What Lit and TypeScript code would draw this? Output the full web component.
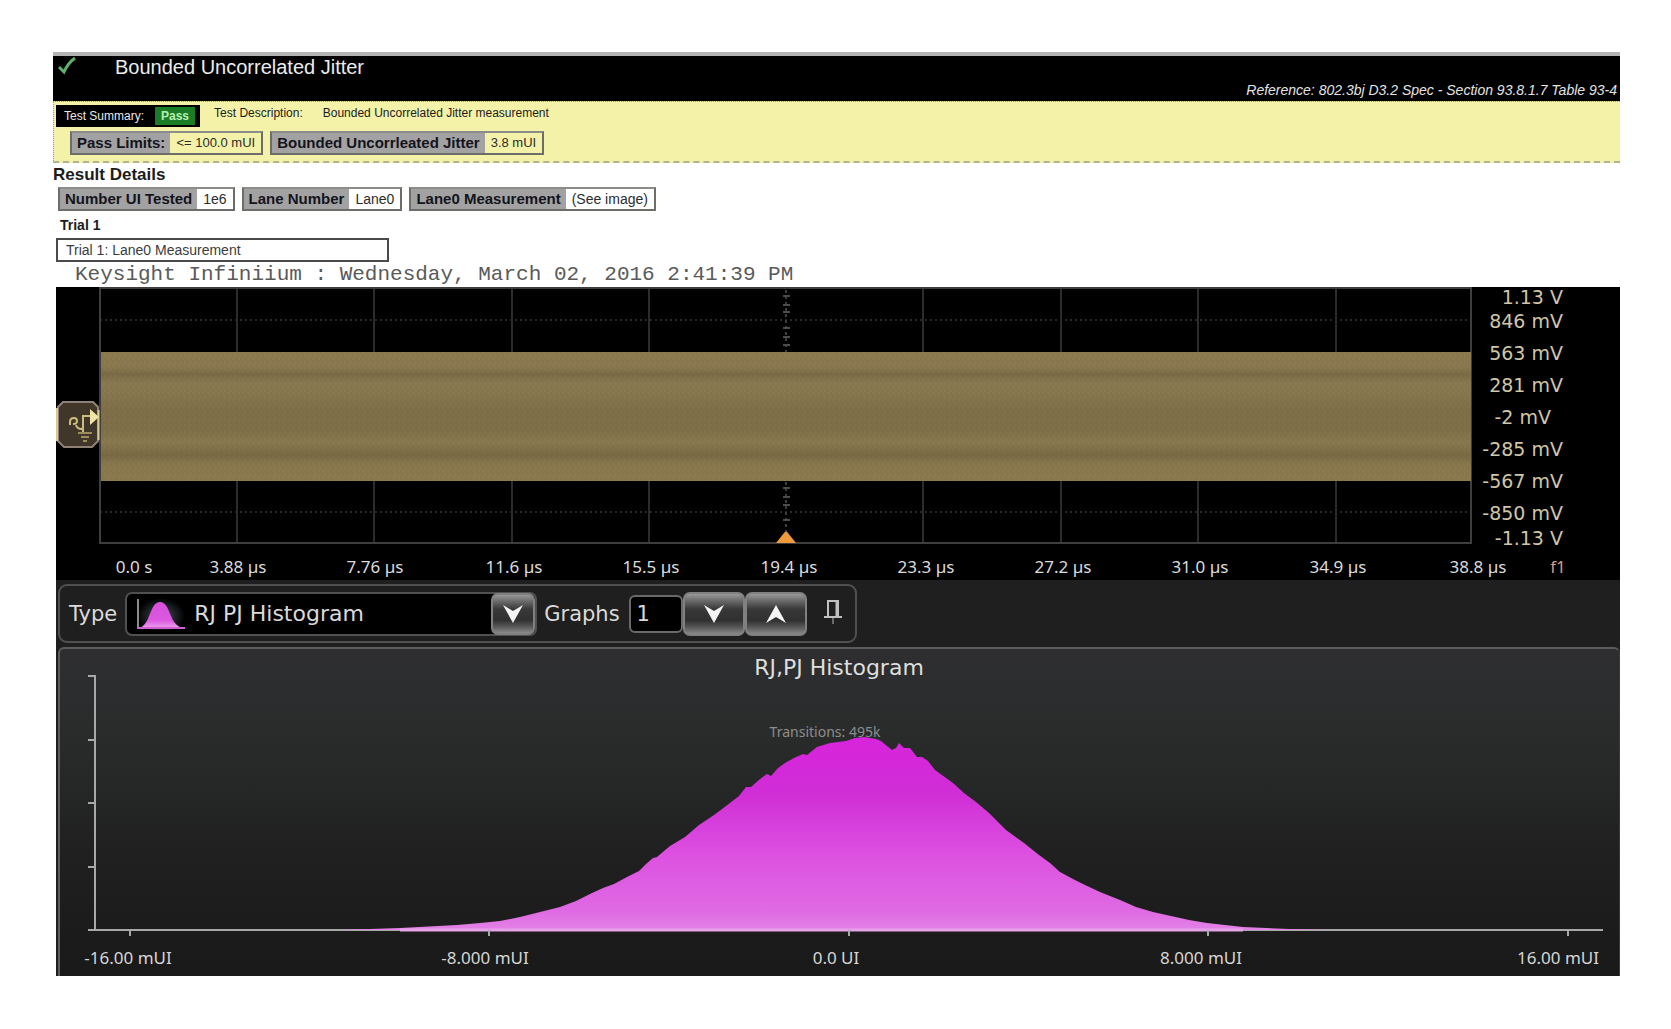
import { LitElement, html, svg, css } from "lit";
import { customElement } from "lit/decorators.js";

interface Fact {
  label: string;
  value: string;
}

const LIMITS: Fact[] = [
  { label: "Pass Limits:", value: "<= 100.0 mUI" },
  { label: "Bounded Uncorrleated Jitter", value: "3.8 mUI" },
];

const DETAILS: Fact[] = [
  { label: "Number UI Tested", value: "1e6" },
  { label: "Lane Number", value: "Lane0" },
  { label: "Lane0 Measurement", value: "(See image)" },
];

@customElement("fact-chips")
class FactChips extends LitElement {
  static properties = { facts: { attribute: false } };
  declare facts: Fact[];

  constructor() {
    super();
    this.facts = [];
  }

  static styles = css`
    :host {
      display: block;
    }
    .chips {
      display: flex;
      flex-wrap: wrap;
      gap: 7px;
      margin: 0;
    }
    .chip {
      display: flex;
      box-sizing: border-box;
      height: 24px;
      border: 2px solid #6d6d6a;
      border-top-color: #8c8c88;
      font-family: "Liberation Sans", Arial, sans-serif;
      font-size: var(--value-size, 13px);
      line-height: 20px;
      color: #2c2c2c;
    }
    .label {
      padding: 0 5px;
      background: #a2a2a2;
      color: #14141c;
      font-size: 15px;
      font-weight: bold;
    }
    .value {
      margin: 0;
      padding: 0 6px;
    }
  `;

  render() {
    return html`<dl class="chips">
      ${this.facts.map(
        (f) => html`<div class="chip">
          <dt class="label">${f.label}</dt>
          <dd class="value">${f.value}</dd>
        </div>`
      )}
    </dl>`;
  }
}

const VOLTS = [
  { text: "1.13 V", x: 1563, y: 304 },
  { text: "846 mV", x: 1563, y: 328 },
  { text: "563 mV", x: 1563, y: 360 },
  { text: "281 mV", x: 1563, y: 392 },
  { text: "-2 mV", x: 1551, y: 424 },
  { text: "-285 mV", x: 1563, y: 456 },
  { text: "-567 mV", x: 1563, y: 488 },
  { text: "-850 mV", x: 1563, y: 520 },
  { text: "-1.13 V", x: 1563, y: 545 },
];

const TIMES = [
  { text: "0.0 s", x: 134 },
  { text: "3.88 µs", x: 238 },
  { text: "7.76 µs", x: 375 },
  { text: "11.6 µs", x: 514 },
  { text: "15.5 µs", x: 651 },
  { text: "19.4 µs", x: 789 },
  { text: "23.3 µs", x: 926 },
  { text: "27.2 µs", x: 1063 },
  { text: "31.0 µs", x: 1200 },
  { text: "34.9 µs", x: 1338 },
  { text: "38.8 µs", x: 1478 },
];

const COLUMNS = [237, 374, 512, 649, 923, 1061, 1198, 1336];
const CROSS_TICKS = [296, 305, 312, 328, 337, 345, 488, 497, 505, 520];

@customElement("scope-trace")
class ScopeTrace extends LitElement {
  static styles = css`
    :host {
      display: block;
    }
    .plot {
      display: block;
      width: 100%;
      overflow: visible;
      background: #000;
    }
    .frame {
      fill: none;
      stroke: #3e3e3e;
      stroke-width: 2;
    }
    .column {
      stroke: #2c2c2c;
      stroke-width: 2;
    }
    .row {
      stroke: #282828;
      stroke-width: 2;
      stroke-dasharray: 2 3;
    }
    .axis {
      stroke: #3c3c3c;
      stroke-width: 2;
      stroke-dasharray: 3 3;
    }
    .cross {
      stroke: #4c4c4c;
      stroke-width: 2;
    }
    .volt {
      fill: #d0c6a8;
      font: 19px "DejaVu Sans", Verdana, sans-serif;
      text-anchor: end;
    }
    .time {
      fill: #dcdcdc;
      font: 17px "Noto Sans", "Open Sans", sans-serif;
      text-anchor: middle;
    }
    .source {
      fill: #d79c80;
    }
  `;

  render() {
    return html`<svg class="plot" viewBox="56 287 1564 293" role="img" aria-label="Lane0 waveform">
      <defs>
        <linearGradient id="band" x1="0" y1="0" x2="0" y2="1">
          <stop offset="0" stop-color="#8d7b52" />
          <stop offset="0.12" stop-color="#8a7850" />
          <stop offset="0.17" stop-color="#7b6b46" />
          <stop offset="0.24" stop-color="#8a7951" />
          <stop offset="0.32" stop-color="#88774f" />
          <stop offset="0.45" stop-color="#7f7049" />
          <stop offset="0.6" stop-color="#7f7049" />
          <stop offset="0.7" stop-color="#8a7951" />
          <stop offset="0.8" stop-color="#7a6a44" />
          <stop offset="0.87" stop-color="#8a784e" />
          <stop offset="1" stop-color="#8d7b4f" />
        </linearGradient>
        <pattern id="grain" width="5" height="7" patternUnits="userSpaceOnUse">
          <path d="M1 0V4M3 3V7" stroke="#4f4428" stroke-opacity="0.14" />
        </pattern>
      </defs>
      ${COLUMNS.map((x) => svg`<line class="column" x1=${x} x2=${x} y1="288" y2="543" />`)}
      ${[320, 512].map((y) => svg`<line class="row" x1="100" x2="1471" y1=${y} y2=${y} />`)}
      <line class="axis" x1="786" x2="786" y1="290" y2="543" />
      ${CROSS_TICKS.map((y) => svg`<line class="cross" x1="783" x2="790" y1=${y} y2=${y} />`)}
      <rect class="frame" x="100" y="288" width="1371" height="255" />
      <rect x="101" y="352" width="1370" height="129" fill="url(#band)" />
      <rect x="101" y="352" width="1370" height="129" fill="url(#grain)" />
      <path d="M776 543L784 533Q786 530 788 533L796 543Z" fill="#f09a3e" />
      <g>
        <path d="M63 402H93L98 407V441L92 447H64L58 441V407Z" fill="#40362a" stroke="#8f8178" stroke-width="2" />
        <path d="M57 408V441M98.500 410V440" stroke="#d8cb90" stroke-width="2" />
        <path d="M70 425V422Q70 418 74 418Q77 418 77 421Q77 424 73 424M76 425Q77 429 82 429M83 432V416H91" fill="none" stroke="#cdbd7c" stroke-width="2" />
        <path d="M78 433H92M81 437H89M83 441H87" stroke="#9b8d5c" stroke-width="2" />
        <path d="M90 409L99 417L90 425Z" fill="#f0e3a6" />
      </g>
      ${VOLTS.map((v) => svg`<text class="volt" x=${v.x} y=${v.y}>${v.text}</text>`)}
      ${TIMES.map((t) => svg`<text class="time" x=${t.x} y="573">${t.text}</text>`)}
      <text class="time source" x="1558" y="573">f1</text>
    </svg>`;
  }
}

/* Outline of the distribution, left tail to right tail. */
const BELL: number[][] = [
  [340, 930], [400, 928], [457, 925], [480, 923], [500, 921], [520, 917], [540, 912], [560, 907],
  [576, 901], [592, 893], [603, 888], [614, 884], [627, 877], [639, 871], [646, 864], [653, 858],
  [657, 857], [670, 846], [685, 837], [699, 825], [714, 815], [726, 806], [739, 796], [746, 787],
  [751, 787], [760, 779], [767, 774], [771, 776], [778, 768], [785, 763], [794, 758], [803, 754],
  [807, 755], [817, 747], [830, 743], [846, 741], [855, 738], [864, 737], [876, 739], [881, 741],
  [887, 746], [892, 750], [896, 748], [899, 743], [904, 748], [910, 748], [917, 757], [922, 757],
  [928, 761], [935, 770], [953, 783], [964, 793], [976, 802], [989, 813], [1006, 830], [1024, 843],
  [1039, 855], [1050, 863], [1060, 872], [1073, 879], [1085, 885], [1100, 892], [1120, 900],
  [1136, 907], [1153, 912], [1171, 916], [1189, 920], [1207, 923], [1243, 927], [1289, 929], [1330, 930],
];

const BINS = [
  { text: "-16.00 mUI", tick: 130, x: 128 },
  { text: "-8.000 mUI", tick: 489, x: 485 },
  { text: "0.0 UI", tick: 849, x: 836 },
  { text: "8.000 mUI", tick: 1208, x: 1201 },
  { text: "16.00 mUI", tick: 1568, x: 1558 },
];

@customElement("jitter-histogram")
class JitterHistogram extends LitElement {
  static styles = css`
    :host {
      display: block;
    }
    .plot {
      display: block;
      width: 100%;
    }
    .axis {
      fill: none;
      stroke: #a8a8a8;
      stroke-width: 2;
    }
    .tick {
      stroke: #a8a8a8;
      stroke-width: 2;
    }
    .title {
      fill: #dedede;
      font: 22px "DejaVu Sans", Verdana, sans-serif;
      text-anchor: middle;
    }
    .bin {
      fill: #d6d6d6;
      font: 17px "Noto Sans", "Open Sans", sans-serif;
      text-anchor: middle;
    }
    .note {
      fill: #8d8d8d;
      font: 14px "Noto Sans", "Open Sans", sans-serif;
      text-anchor: middle;
    }
  `;

  render() {
    const outline = BELL.map((p) => p.join(" ")).join("L");
    return html`<svg class="plot" viewBox="60 649 1559 327" role="img" aria-label="RJ,PJ Histogram">
      <defs>
        <linearGradient id="bell" gradientUnits="userSpaceOnUse" x1="0" y1="736" x2="0" y2="931">
          <stop offset="0" stop-color="#d824dc" />
          <stop offset="0.3" stop-color="#d02ed6" />
          <stop offset="0.6" stop-color="#dc50e0" />
          <stop offset="0.9" stop-color="#df6ae3" />
          <stop offset="1" stop-color="#e384e6" />
        </linearGradient>
      </defs>
      <path class="axis" d="M95 675V930H1603" />
      ${[676, 740, 803, 867, 930].map((y) => svg`<line class="tick" x1="88" x2="95" y1=${y} y2=${y} />`)}
      <path d="M${outline}Z" fill="url(#bell)" />
      <path d="M400 930H1243" stroke="#e6a2e6" stroke-width="3" />
      ${BINS.map(
        (b) => svg`<line class="tick" x1=${b.tick} x2=${b.tick} y1="930" y2="936" />
          <text class="bin" x=${b.x} y="964">${b.text}</text>`
      )}
      <text class="title" x="839" y="675">RJ,PJ Histogram</text>
      <text class="note" x="825" y="737">Transitions: 495k</text>
    </svg>`;
  }
}

const downArrow = html`<svg width="22" height="20" viewBox="0 0 22 20" aria-hidden="true">
  <path d="M1 1L11 7L21 1L11 19Z" fill="#f4f4f4" />
</svg>`;

const upArrow = html`<svg width="22" height="20" viewBox="0 0 22 20" aria-hidden="true">
  <path d="M1 19L11 13L21 19L11 1Z" fill="#f4f4f4" />
</svg>`;

@customElement("graph-toolbar")
class GraphToolbar extends LitElement {
  static styles = css`
    :host {
      display: block;
    }
    .bar {
      display: inline-flex;
      align-items: center;
      box-sizing: border-box;
      height: 59px;
      padding: 0 12px 0 9px;
      border: 2px solid #505050;
      border-radius: 9px;
      font: 21px "DejaVu Sans", Verdana, sans-serif;
      color: #dadada;
      vertical-align: top;
    }
    .combo {
      display: flex;
      align-items: center;
      box-sizing: border-box;
      width: 412px;
      height: 44px;
      margin: 0 7px 0 8px;
      padding-left: 9px;
      border: 2px solid #505050;
      border-radius: 7px;
      background: #000;
    }
    .type {
      flex: 1;
      min-width: 0;
      height: 36px;
      margin: 0;
      padding: 0 0 0 8px;
      border: 0;
      appearance: none;
      background: transparent;
      color: inherit;
      font: 22px "DejaVu Sans", Verdana, sans-serif;
    }
    .key {
      display: flex;
      align-items: center;
      justify-content: center;
      box-sizing: border-box;
      width: 62px;
      height: 44px;
      padding: 0;
      border: 2px solid #808080;
      border-radius: 7px;
      background: linear-gradient(#999 0%, #6c6c6c 16%, #383838 38%, #303030 66%, #5a5a5a 84%, #8a8a8a 100%);
    }
    .drop {
      width: 44px;
      height: 42px;
      pointer-events: none;
    }
    .count {
      box-sizing: border-box;
      width: 54px;
      height: 38px;
      margin: 0 0 0 9px;
      padding: 0 0 0 6px;
      border: 2px solid #6a6a6a;
      border-radius: 6px;
      background: #000;
      color: inherit;
      font: inherit;
    }
    .pin {
      display: flex;
      align-self: flex-start;
      margin: 0 0 0 16px;
      padding: 13px 0 0;
      border: 0;
      background: none;
    }
  `;

  render() {
    return html`<div class="bar">
      <label for="type">Type</label>
      <div class="combo">
        <svg width="50" height="32" viewBox="0 0 50 32" aria-hidden="true">
          <defs>
            <linearGradient id="mini" x1="0" y1="0" x2="0" y2="1">
              <stop offset="0" stop-color="#d94fdc" />
              <stop offset="0.7" stop-color="#dc58e0" />
              <stop offset="1" stop-color="#eca0ee" />
            </linearGradient>
            <radialGradient id="halo">
              <stop offset="0.4" stop-color="#2c3238" />
              <stop offset="1" stop-color="#000" />
            </radialGradient>
          </defs>
          <ellipse cx="25" cy="18" rx="24" ry="18" fill="url(#halo)" />
          <path d="M2 1V30" stroke="#8a8a8a" stroke-width="2" />
          <path d="M4 30C11 27 13 17 17 9Q20 4 24 4Q28 4 31 9C35 17 37 27 46 30Z" fill="url(#mini)" />
          <path d="M1 30H49" stroke="#cf5fd2" stroke-width="2" />
        </svg>
        <select id="type" class="type">
          <option>RJ PJ Histogram</option>
        </select>
        <span class="key drop">${downArrow}</span>
      </div>
      <label for="count">Graphs</label>
      <input id="count" class="count" type="text" inputmode="numeric" value="1" />
      <button class="key" type="button" aria-label="Fewer graphs">${downArrow}</button>
      <button class="key" type="button" aria-label="More graphs">${upArrow}</button>
      <button class="pin" type="button" aria-label="Pin toolbar">
        <svg width="20" height="26" viewBox="0 0 20 26" aria-hidden="true">
          <path d="M5 17V2H15V17M1 18H19" fill="none" stroke="#c0c0c0" stroke-width="2" />
          <path d="M14 2V17" stroke="#c0c0c0" stroke-width="3" />
          <path d="M10 19V25" stroke="#6a6a6a" stroke-width="2" />
        </svg>
      </button>
    </div>`;
  }
}

@customElement("app-root")
class AppRoot extends LitElement {
  static styles = css`
    :host {
      display: block;
      font-family: "Liberation Sans", Arial, sans-serif;
      color: #1c1c1c;
    }
    .report {
      padding: 52px 51px 52px 53px;
      background: #fff;
    }
    .head {
      display: flex;
      justify-content: space-between;
      box-sizing: border-box;
      height: 49px;
      padding: 0 3px 0 5px;
      border-top: 4px solid #b4b4b4;
      background: #000;
    }
    .heading {
      display: flex;
      gap: 37px;
    }
    .name {
      margin: 0;
      font-size: 20px;
      font-weight: normal;
      line-height: 22px;
      color: #ececec;
    }
    .spec {
      align-self: flex-end;
      margin: 0;
      font-size: 14px;
      font-style: italic;
      line-height: 22px;
      color: #e4e4e4;
    }
    .summary {
      padding: 3px 2px 6px;
      border: 1px dotted #9a9a80;
      border-width: 1px 0 1px 1px;
      border-bottom: 2px dashed #b4b48c;
      background: #f4f2a8;
    }
    .line {
      display: flex;
      align-items: flex-start;
      font-size: 12px;
      line-height: 16px;
    }
    .status {
      display: flex;
      align-items: center;
      gap: 11px;
      box-sizing: border-box;
      height: 22px;
      padding: 0 5px 0 8px;
      background: #000;
      color: #e8e8e8;
    }
    .pass {
      padding: 1px 6px;
      background: #1a7c26;
      color: #b8f0b0;
      font-weight: bold;
    }
    .term {
      margin-left: 14px;
    }
    .text {
      margin-left: 20px;
    }
    .limits {
      padding: 4px 0 0 14px;
    }
    .section {
      margin: 0;
      font-size: 17px;
      line-height: 24px;
    }
    .details {
      --value-size: 14px;
      padding-left: 5px;
    }
    .trial {
      margin: 0;
      padding: 2px 0 0 7px;
      font-size: 14px;
      line-height: 25px;
    }
    .caption {
      box-sizing: border-box;
      width: 333px;
      height: 24px;
      margin: 0 0 0 3px;
      padding-left: 8px;
      border: 2px solid #4a4a4a;
      font-size: 14px;
      line-height: 20px;
      color: #3c3c3c;
    }
    .stamp {
      margin: 0;
      padding-left: 22px;
      font: 21px/25px "Liberation Mono", "Courier New", monospace;
      color: #5a5a5a;
    }
    .scope {
      margin-left: 3px;
      background: #1f1f1f;
    }
    .tools {
      padding: 4px 2px;
    }
    .panel {
      margin-left: 2px;
      border: 2px solid #5c5c5c;
      border-right: 1px solid #3a3a3a;
      border-bottom: 0;
      border-radius: 6px 6px 0 0;
      background: linear-gradient(#2e2e30, #2a2c2c 25%, #202020 62%, #191919);
    }
  `;

  render() {
    return html`<main class="report">
      <header class="head">
        <div class="heading">
          <svg width="20" height="22" viewBox="0 0 20 22" aria-hidden="true">
            <path d="M1 11L6 16Q10 7 17 2" fill="none" stroke="#5fb06a" stroke-width="3" />
          </svg>
          <h1 class="name">Bounded Uncorrelated Jitter</h1>
        </div>
        <p class="spec">Reference: 802.3bj D3.2 Spec - Section 93.8.1.7 Table 93-4</p>
      </header>
      <section class="summary">
        <div class="line">
          <span class="status">Test Summary: <span class="pass">Pass</span></span>
          <span class="term">Test Description:</span>
          <span class="text">Bounded Uncorrelated Jitter measurement</span>
        </div>
        <fact-chips class="limits" .facts=${LIMITS}></fact-chips>
      </section>
      <h2 class="section">Result Details</h2>
      <fact-chips class="details" .facts=${DETAILS}></fact-chips>
      <h3 class="trial">Trial 1</h3>
      <div class="caption">Trial 1: Lane0 Measurement</div>
      <p class="stamp">Keysight Infiniium : Wednesday, March 02, 2016 2:41:39 PM</p>
      <div class="scope">
        <scope-trace></scope-trace>
        <graph-toolbar class="tools"></graph-toolbar>
        <div class="panel"><jitter-histogram></jitter-histogram></div>
      </div>
    </main>`;
  }
}
